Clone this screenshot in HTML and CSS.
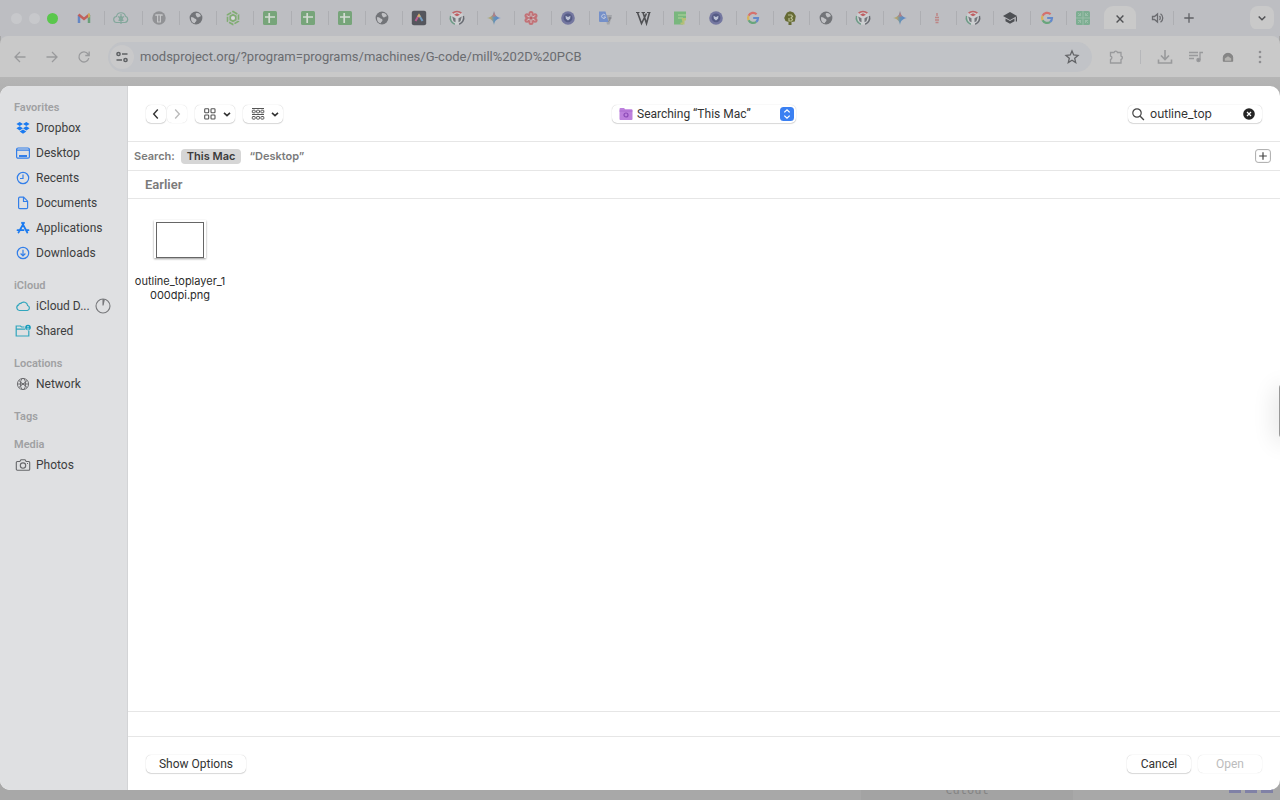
FILE: index.html
```html
<!DOCTYPE html>
<html lang="en">
<head>
<meta charset="utf-8">
<title>Open file</title>
<link rel="stylesheet" href="styles.css">
</head>
<body>
<svg class="defs" aria-hidden="true">
  <symbol id="sheet" viewBox="0 0 16 16"><rect x="1" y="1" width="14" height="14" rx="1.5" fill="#77a57a"/><path d="M3 7h10M7.2 3v10" stroke="#d4dbd3" stroke-width="1.7"/></symbol>
  <symbol id="globe" viewBox="0 0 16 16"><circle cx="8" cy="8" r="6.4" fill="#727478"/><path d="M3.2 7c2 0 2.600.8 3.400 1.500s1.900.3 1.900 1.800-1.500 1.300-1.700 3C4.500 13 2.400 10.800 3.200 7zM8 3.200c2-.8 4.300.6 4.900 2.800-.9 1.300-1.500.4-2.400 1.200S8.300 6.500 8.200 5.700 7 4.300 8 3.200z" fill="#c0c1c4"/></symbol>
  <symbol id="fab" viewBox="0 0 16 16"><circle cx="8" cy="8" r="6.800" fill="#cdcfd1"/><path d="M3.600 3.200A6.500 6.500 0 0 1 12.400 3.200" fill="none" stroke="#bf6668" stroke-width="1.600"/><path d="M1.600 6A6.600 6.600 0 0 0 5.800 14.200" fill="none" stroke="#6d9b86" stroke-width="1.500"/><path d="M14.400 6A6.600 6.600 0 0 1 10.200 14.200" fill="none" stroke="#686b72" stroke-width="1.500"/><path d="M8 3.200 11 4.700 8 6.200 5 4.700z" fill="#bf5d61"/><path d="m3.200 6.500 3.300 1.700v4l-2-1zM12.800 6.500 9.500 8.200v4l2-1z" fill="#74777c"/></symbol>
  <linearGradient id="gg" x1="0" x2="1"><stop offset="0" stop-color="#87a56d"/><stop offset=".25" stop-color="#b9a36a"/><stop offset=".5" stop-color="#6693b6"/><stop offset="1" stop-color="#577fce"/></linearGradient>
  <symbol id="gem" viewBox="0 0 16 16"><path d="M8 1c.7 4.300 2.700 6.300 7 7-4.300.7-6.300 2.700-7 7-.7-4.300-2.700-6.300-7-7 4.300-.7 6.300-2.700 7-7z" fill="url(#gg)"/><path d="M8 1c.5 3 1.500 4.500 2.500 5.500L8 6.500l-2 .3C7.200 5.500 7.700 3.500 8 1z" fill="#b67e80"/></symbol>
  <symbol id="goog" viewBox="0 0 16 16"><g fill="none" stroke-width="2.200"><path d="M11.600 4.200A5 5 0 0 0 3.600 5.800" stroke="#d5716c"/><path d="M3.600 5.800a5 5 0 0 0 0 4.400" stroke="#d8b35a"/><path d="M3.600 10.200a5 5 0 0 0 7.600 1.600" stroke="#68a57b"/><path d="M11.200 11.800A5 5 0 0 0 13 8H8.200" stroke="#6389cb"/></g></symbol>
  <symbol id="disc" viewBox="0 0 16 16"><circle cx="8" cy="8" r="6.800" fill="#7477a0"/><circle cx="8" cy="7.800" r="4.400" fill="#555b85"/><path d="M5.500 5.800 8 7l2.500-1.200-.4 3L8 10.500 5.900 8.800z" fill="#bcc2d5"/></symbol>
</svg>

<header class="tabstrip">
  <div class="lights"><i></i><i></i><i class="green"></i></div>
  <div class="tabs early">
    <span class="tab"><svg viewBox="0 0 16 16"><path d="M3 13V5" stroke="#6587c4" stroke-width="2.500"/><path d="M13 13V5" stroke="#6a9f79" stroke-width="2.500"/><path d="M2.500 4.500 8 9l5.500-4.500" fill="none" stroke="#c1605b" stroke-width="2.500"/><path d="M12 3.500h2V7l-2 1z" fill="#c9a95a"/></svg></span>
    <span class="tab"><svg viewBox="0 0 16 16" fill="none" stroke="#83a79b" stroke-width="1.200"><path d="M4 12.500a3 3 0 0 1-.5-6 4.600 4.600 0 0 1 9-.2 3.200 3.200 0 0 1-.5 6.200zM8 4v10M5 6.500l3 2 3-2M5.500 10.500 8 9l2.500 1.500"/><circle cx="8" cy="8" r="1.500"/></svg></span>
    <span class="tab"><svg viewBox="0 0 16 16"><circle cx="8" cy="8" r="6.700" fill="#919295"/><path d="M5 6V4.800h6V6M6.600 5v6.800M9.400 5v6.800M6 12h4" fill="none" stroke="#c5c6c8" stroke-width="1.200"/></svg></span>
    <span class="tab"><svg><use href="#globe"/></svg></span>
    <span class="tab"><svg viewBox="0 0 16 16" fill="none" stroke="#80ad72" stroke-width="1.600"><path d="m8 1.500 5.500 3.200v6.600L8 14.500l-5.500-3.200V4.700z" stroke-dasharray="5 1.300"/><path d="m8 4.700 2.800 1.600v3.400L8 11.300 5.200 9.700V6.300z"/><circle cx="8" cy="8" r="1" fill="#d9dcd9" stroke="#d9dcd9"/></svg></span>
    <span class="tab"><svg><use href="#sheet"/></svg></span>
    <span class="tab"><svg><use href="#sheet"/></svg></span>
    <span class="tab"><svg><use href="#sheet"/></svg></span>
    <span class="tab"><svg><use href="#globe"/></svg></span>
    <span class="tab"><svg viewBox="0 0 16 16"><rect x=".8" y=".8" width="14.400" height="14.400" rx="2" fill="#55565d"/><path d="M4.500 11 8 5" stroke="#b95e90" stroke-width="2"/><path d="m8 5 3.500 6" stroke="#729bc0" stroke-width="2"/><path d="M6.800 6.800 8 4.800l1.200 2" stroke="#d4b06b" stroke-width="1.500" fill="none"/></svg></span>
    <span class="tab"><svg><use href="#fab"/></svg></span>
    <span class="tab"><svg><use href="#gem"/></svg></span>
    <span class="tab"><svg viewBox="0 0 16 16"><g fill="#c27277"><circle cx="8" cy="3.500" r="2.500"/><circle cx="12" cy="5.700" r="2.500"/><circle cx="12" cy="10.300" r="2.500"/><circle cx="8" cy="12.500" r="2.500"/><circle cx="4" cy="10.300" r="2.500"/><circle cx="4" cy="5.700" r="2.500"/></g><path d="M8 3v10M3.700 5.500l8.600 5M3.700 10.500l8.600-5" stroke="#d1c2c4"/><circle cx="8" cy="8" r="1.800" fill="#b85f65"/></svg></span>
    <span class="tab"><svg><use href="#disc"/></svg></span>
    <span class="tab"><svg viewBox="0 0 16 16"><path d="M7 5h7l-2.500 9.500H9z" fill="#a3a5aa"/><path d="M1 1.500h6.500L10.500 12H2a1 1 0 0 1-1-1z" fill="#7590c9"/><path d="M7.300 5.200A2 2 0 1 0 7.600 7H5.800" fill="none" stroke="#c3cce0"/><path d="M10.500 8h3M12 7.500c0 2-.5 3-1.500 4" stroke="#7c7e84" fill="none"/></svg></span>
  </div>
  <div class="tabs late">
    <span class="tab"><svg viewBox="0 0 16 16" fill="none" stroke="#4f5053"><path d="M1 2.500h3.500M6.500 2.500H10M12 2.500h3.500" stroke-width="1.200"/><path d="m2.500 2.500 4 11 5-10M8 2.500l3.500 11 3-11" stroke-width="1.600"/></svg></span>
    <span class="tab"><svg viewBox="0 0 16 16"><path d="M2 1.500h12V8h-3v6.500H2z" fill="#79b77e"/><path d="M6 5h8M6 8h5" stroke="#9fcb93" stroke-width="1.500"/><path d="M9.500 8H14v2.500h-1.500v4h-4v-2h2z" fill="#b6bf77"/></svg></span>
    <span class="tab"><svg><use href="#disc"/></svg></span>
    <span class="tab"><svg><use href="#goog"/></svg></span>
    <span class="tab"><svg viewBox="0 0 16 16"><path d="M5 2.500 8 1.300l3.500 1.200L13.800 6l-1 5.500-3.300.5v3h-3v-3l-3-1L2.200 8 3.500 5z" fill="#666b35"/><path d="M6 5h3.500l1 1.500L9 8l1.500 1.500-1 1.500H7V8" fill="none" stroke="#babf91" stroke-width="1.200"/></svg></span>
    <span class="tab"><svg><use href="#globe"/></svg></span>
    <span class="tab"><svg><use href="#fab"/></svg></span>
    <span class="tab"><svg><use href="#gem"/></svg></span>
    <span class="tab"><svg viewBox="0 0 16 16"><path d="M8 3v3M6 7.500h4M6 10h4M6.500 12.500h3" stroke="#bd8585" stroke-width="1.500"/></svg></span>
    <span class="tab"><svg><use href="#fab"/></svg></span>
    <span class="tab"><svg viewBox="0 0 16 16" fill="#4e5054"><path d="m8 2 7 4-7 4-7-4zM3.500 8.600v2.700L8 13.700l4.500-2.400V8.600L8 11z"/><path d="M13.800 6.500H15v5h-1.200z"/></svg></span>
    <span class="tab"><svg><use href="#goog"/></svg></span>
    <span class="tab"><svg viewBox="0 0 16 16"><rect x="1" y="1" width="14" height="14" rx="1.500" fill="#7dae92"/><path d="M8 1v14M1 8h14M3 3l3 3M13 3l-3 3M3 13l3-3M13 13l-3-3M3 5.500h2.500V3M10.500 3v2.500H13M3 10.500h2.500V13M10.500 13v-2.500H13" fill="none" stroke="#9dc0ab" stroke-width=".9"/></svg></span>
  </div>
  <button class="active-tab" aria-label="Close tab"><svg viewBox="0 0 16 16"><path d="m4.600 4.600 6.800 6.800m0-6.800-6.800 6.800" stroke="#515255" stroke-width="1.400"/></svg></button>
  <button class="audio" aria-label="Mute tab"><svg viewBox="0 0 16 16"><path d="M2.500 6.500h2l3-2.500v8l-3-2.500h-2z" fill="none" stroke="#6b6c70" stroke-width="1.300"/><path d="M9.500 6c1 1 1 3 0 4M10.500 3.800c3 2 3 6.400 0 8.400" fill="none" stroke="#6b6c70" stroke-width="1.300"/></svg></button>
  <button class="new-tab" aria-label="New tab"><svg viewBox="0 0 16 16"><path d="M8 3.300v9.400M3.300 8h9.400" stroke="#606165" stroke-width="1.300"/></svg></button>
  <button class="tab-list" aria-label="Search tabs"><svg viewBox="0 0 16 16"><path d="m4.700 6.500 3.300 3.300 3.300-3.300" fill="none" stroke="#515255" stroke-width="1.500"/></svg></button>
</header>

<nav class="browserbar">
  <button aria-label="Back"><svg viewBox="0 0 16 16"><path d="M13.500 8H3M8 3 3 8l5 5"/></svg></button>
  <button aria-label="Forward"><svg viewBox="0 0 16 16"><path d="M2.500 8H13M8 3l5 5-5 5"/></svg></button>
  <button aria-label="Reload"><svg viewBox="0 0 16 16"><path d="M12.800 9.200A5 5 0 1 1 12 5l1 1.300M13.200 2.500v4H9.300"/></svg></button>
  <div class="omnibox">
    <label class="site" for="url" aria-label="Address"><svg viewBox="0 0 16 16" fill="none" stroke="#5e6063" stroke-width="1.500"><circle cx="4.500" cy="5" r="1.600"/><path d="M8 5h5.500M2.500 11H8"/><circle cx="11.500" cy="11" r="1.600"/></svg></label>
    <input id="url" type="text" value="modsproject.org/?program=programs/machines/G-code/mill%202D%20PCB">
    <svg class="star" viewBox="0 0 16 16"><path d="m8 2 1.700 4 4.300.4-3.300 2.900 1 4.200L8 11.200l-3.700 2.300 1-4.200L2 6.400 6.300 6z" fill="none" stroke="#626366" stroke-width="1.300"/></svg>
  </div>
  <div class="extras">
    <button aria-label="Extensions"><svg viewBox="0 0 16 16"><path d="M2.500 3.500H6a1.800 1.800 0 0 1 3.500 0H13V7a1.800 1.800 0 0 1 0 3.500V14H2.500v-3.500a1.800 1.800 0 0 0 0-3.500z"/></svg></button>
    <i class="bar"></i>
    <button aria-label="Downloads"><svg viewBox="0 0 16 16"><path d="M8 1v9M4 6.500 8 10.500l4-4M1.500 10.500V14h13v-3.500" stroke-width="1.600"/></svg></button>
    <button aria-label="Media"><svg viewBox="0 0 16 16"><path d="M1 3.500h9M1 6.500h9M1 9.500h5M12 11V3.500h3"/><circle cx="10.500" cy="11" r="1.600" fill="#929295"/></svg></button>
    <button aria-label="Profile"><svg viewBox="0 0 16 16"><path d="M3.300 12.300V8.500a4.700 4.200 0 0 1 9.400 0v3.800z" fill="#868686" stroke="#7c7c7c" stroke-width=".8"/><path d="M4.800 11.800V9.500L8 7.300l3.200 2.200v2.300z" fill="#b4b3b0" stroke="none"/></svg></button>
    <button aria-label="Menu"><svg viewBox="0 0 16 16"><g fill="#8e8e91" stroke="none"><circle cx="8" cy="3" r="1.300"/><circle cx="8" cy="8" r="1.300"/><circle cx="8" cy="13" r="1.300"/></g></svg></button>
  </div>
</nav>
<div class="workspace"><div class="node">cutout</div><div class="dashes"><i></i><i></i><i></i></div></div>

<main class="dialog" role="dialog" aria-label="Open">
  <aside class="sidebar">
    <h2>Favorites</h2>
    <a href="#"><svg viewBox="0 0 16 16" fill="#1a7af0"><path d="m4.700 2 3.300 2-3.300 2.100L1.400 4zM11.300 2l3.300 2-3.300 2.100L8 4zM4.700 6.200 8 8.300l-3.300 2.100-3.300-2.100zM11.300 6.200l3.300 2.100-3.300 2.100L8 8.300zM8 9.600l3.300 2L8 13.800l-3.300-2.200z"/></svg>Dropbox</a>
    <a href="#"><svg viewBox="0 0 16 16" fill="none" stroke="#337fe9" stroke-width="1.200"><rect x="1.600" y="3" width="12.800" height="10.200" rx="1.500"/><path d="M2 5.200h12"/><path d="M4 11h8" stroke-width="2"/></svg>Desktop</a>
    <a href="#"><svg viewBox="0 0 16 16" fill="none" stroke="#337fe9" stroke-width="1.200"><circle cx="8" cy="8" r="5.700"/><path d="M8 4.500V8.500H5"/></svg>Recents</a>
    <a href="#"><svg viewBox="0 0 16 16" fill="none" stroke="#337fe9" stroke-width="1.200"><path d="M4.800 2.200h3.800l4 4v6.300a1.200 1.200 0 0 1-1.200 1.200H4.800a1.200 1.200 0 0 1-1.200-1.200V3.400a1.200 1.200 0 0 1 1.200-1.200zM8.500 2.500v4h4"/></svg>Documents</a>
    <a href="#"><svg viewBox="0 0 16 16" fill="none" stroke="#1a7af0" stroke-width="1.800" stroke-linecap="round"><path d="m7 2.800 5.300 9.700M9 2.800l-4.500 8M2.500 10.200h6M11.500 10.200h2M3.500 12.500l.3-.5"/></svg>Applications</a>
    <a href="#"><svg viewBox="0 0 16 16" fill="none" stroke="#337fe9" stroke-width="1.200"><circle cx="8" cy="8" r="5.700"/><path d="M8 4.800v6M5.600 8.500 8 10.900l2.400-2.400"/></svg>Downloads</a>
    <h2>iCloud</h2>
    <a href="#"><svg viewBox="0 0 16 16" fill="none" stroke="#31a6bd" stroke-width="1.200"><path d="M4.300 12.500a2.900 2.900 0 0 1-.6-5.600 1.800 1.800 0 0 1 2-1.400 3.900 3.900 0 0 1 6.900 2 2.600 2.600 0 0 1-.2 5z"/></svg><span>iCloud D...</span><svg class="progress" viewBox="0 0 16 16" fill="none" stroke="#77787b" stroke-width="1.100"><circle cx="8" cy="8" r="7"/><path d="M8 1v6.500L9.300 1.500" fill="#77787b"/></svg></a>
    <a href="#"><svg viewBox="0 0 16 16" fill="none" stroke="#31a6bd" stroke-width="1.200"><path d="M9.500 4H6.500L5.500 3H1.200v10h12.600V7.500M1.200 6.200h9"/><circle cx="13" cy="4.500" r="2.800" fill="#159bbb" stroke="none"/><path d="M13 3v1.500M11.700 6h2.600" stroke="#d9edf1"/></svg>Shared</a>
    <h2>Locations</h2>
    <a href="#"><svg viewBox="0 0 16 16" fill="none" stroke="#66676a" stroke-width=".9"><circle cx="8" cy="8" r="5.600"/><ellipse cx="8" cy="8" rx="2.600" ry="5.600"/><path d="M2.500 8h11M3.800 4.500l8.400 7M12.200 4.500l-8.400 7"/></svg>Network</a>
    <h2>Tags</h2>
    <h2>Media</h2>
    <a href="#"><svg viewBox="0 0 16 16" fill="none" stroke="#66676a" stroke-width="1.100"><path d="M2.300 4.500h2.500L6 2.800h4l1.200 1.700h2.500a1 1 0 0 1 1 1v6.700a1 1 0 0 1-1 1H2.300a1 1 0 0 1-1-1V5.500a1 1 0 0 1 1-1z"/><circle cx="8" cy="8.600" r="2.700"/><path d="M12 6.500h1"/></svg>Photos</a>
  </aside>

  <section class="main">
    <div class="toolbar">
      <div class="left">
        <div class="pair">
          <button class="ctl nav" aria-label="Back"><svg viewBox="0 0 16 16"><path d="M9.800 3.500 5.700 8l4.100 4.500" stroke="#333" stroke-width="1.400"/></svg></button>
          <button class="ctl nav" aria-label="Forward" disabled><svg viewBox="0 0 16 16"><path d="M6.200 3.500 10.300 8l-4.100 4.500" stroke="#bbb" stroke-width="1.400"/></svg></button>
        </div>
        <button class="ctl view" aria-label="Icon view"><svg viewBox="0 0 16 16" stroke="#555" stroke-width="1.100"><rect x="2.700" y="2.700" width="4" height="4" rx=".8"/><rect x="9" y="2.700" width="4" height="4" rx=".8"/><rect x="2.700" y="9" width="4" height="4" rx=".8"/><rect x="9" y="9" width="4" height="4" rx=".8"/></svg><svg class="chev" viewBox="0 0 8 16"><path d="m1 6.800 3 2.800 3-2.800" stroke="#333" stroke-width="1.600"/></svg></button>
        <button class="ctl view" aria-label="Group by"><svg viewBox="0 0 16 16" stroke="#555" stroke-width="1"><path d="M2 2.500h12M2 8.500h12"/><rect x="2.300" y="4.200" width="2.900" height="2.600" rx=".6"/><rect x="6.600" y="4.200" width="2.900" height="2.600" rx=".6"/><rect x="10.900" y="4.200" width="2.900" height="2.600" rx=".6"/><rect x="2.300" y="10.500" width="2.900" height="2.600" rx=".6"/><rect x="6.600" y="10.500" width="2.900" height="2.600" rx=".6"/><rect x="10.900" y="10.500" width="2.900" height="2.600" rx=".6"/></svg><svg class="chev" viewBox="0 0 8 16"><path d="m1 6.800 3 2.800 3-2.800" stroke="#333" stroke-width="1.600"/></svg></button>
      </div>
      <button class="ctl place"><svg viewBox="0 0 16 16"><path d="M1.500 3a1 1 0 0 1 1-1H6l1.200 1.300h6.300a1 1 0 0 1 1 1V13a1 1 0 0 1-1 1h-11a1 1 0 0 1-1-1z" fill="#bd80dd"/><path d="M1.500 5h13" stroke="#a666cb" stroke-width=".8"/><circle cx="8" cy="9" r="2" stroke="#8b49b6" stroke-width="1.200"/></svg><span>Searching “This Mac”</span><svg class="updown" viewBox="0 0 14 14"><rect width="14" height="14" rx="3.500" fill="#3b80f2"/><path d="m4.300 5.400 2.700-2.600 2.700 2.600M4.300 8.600 7 11.200l2.700-2.600" stroke="#fff" stroke-width="1.300"/></svg></button>
      <div class="right">
        <div class="ctl search">
          <label for="q" aria-label="Search"><svg viewBox="0 0 16 16"><circle cx="7" cy="7" r="4.200" stroke="#444" stroke-width="1.200"/><path d="m10.200 10.200 3.700 3.700" stroke="#444" stroke-width="1.400"/></svg></label>
          <input id="q" type="text" value="outline_top">
          <button class="clear" aria-label="Clear"><svg viewBox="0 0 12 12"><circle cx="6" cy="6" r="5.800" fill="#242424"/><path d="m4 4 4 4m0-4L4 8" stroke="#fff" stroke-width="1.200"/></svg></button>
        </div>
      </div>
    </div>
    <div class="scope">
      <span>Search:</span><button class="on">This Mac</button><button>“Desktop”</button>
      <button class="add" aria-label="Add rule"><svg viewBox="0 0 16 16"><rect x=".6" y="1.600" width="14.800" height="12.800" rx="2.500" stroke="#aaa"/><path d="M8 4.200v7.600M4.200 8h7.600" stroke="#444" stroke-width="1.200"/></svg></button>
    </div>
    <h1 class="group">Earlier</h1>
    <div class="files">
      <figure><div class="thumb"></div><figcaption>outline_toplayer_1<br>000dpi.png</figcaption></figure>
    </div>
    <div class="pathbar"></div>
    <footer>
      <button class="ctl options">Show Options</button>
      <div class="actions"><button class="ctl">Cancel</button><button class="ctl" disabled>Open</button></div>
    </footer>
  </section>
</main>
<div class="edge"></div>
</body>
</html>
```
FILE: styles.css
```css
* { box-sizing: border-box; }
body { margin: 0; height: 100vh; overflow: hidden; position: relative; display: flex; flex-direction: column; background: #a8a8a8; font: 12px/16px Roboto, sans-serif; color: #3d3e40; }
button { appearance: none; border: 0; padding: 0; margin: 0; background: none; font: inherit; color: inherit; display: flex; align-items: center; justify-content: center; }
input { border: 0; padding: 0; background: none; font: inherit; color: inherit; min-width: 0; outline: 0; }
svg { display: block; width: 16px; height: 16px; flex: none; }
.defs { position: absolute; width: 0; height: 0; }

.tabstrip { height: 36px; flex: none; display: flex; align-items: center; background: #bdbec2; padding-right: 6px; }
.lights { width: 68px; padding-left: 11px; display: flex; gap: 7px; }
.lights i { width: 11px; height: 11px; border-radius: 50%; background: #c7c8cb; }
.lights .green { background: #5ac74c; }
.tabs { display: flex; min-width: 0; }
.early { flex: 559 1 0; }
.late { flex: 477 1 0; }
.tab { flex: 1 1 0; min-width: 0; padding-left: 8px; display: flex; align-items: center; justify-content: space-between; }
.tab::after { content: ""; width: 1px; height: 14px; background: #adaeb2; }
.late .tab:last-child::after { visibility: hidden; }
.active-tab { width: 32px; height: 30px; padding-bottom: 5px; align-self: flex-end; background: #c9c9c9; border-radius: 9px 9px 0 0; }
.audio { width: 38px; height: 14px; padding-left: 6px; border-right: 1px solid #adaeb2; }
.new-tab { width: 30px; }
.tab-list { width: 24px; height: 24px; margin-left: 46px; border-radius: 8px; background: #c9c9c9; }

.browserbar { height: 41px; flex: none; display: flex; align-items: center; background: #c9c9c9; border-radius: 8px 8px 0 0; padding: 0 12px; gap: 16px; box-shadow: 0 -8px 0 -1px #bdbec2; }
.browserbar button svg { fill: none; stroke: #999a9c; stroke-width: 1.300; }
.omnibox { flex: 1; height: 30px; border-radius: 15px; background: #c1c3c7; display: flex; align-items: center; padding: 0 12px 0 2px; font-size: 13px; color: #6a6c70; }
.omnibox input { flex: 1; }
.site { width: 24px; height: 24px; margin-right: 6px; border-radius: 50%; background: #c9c9ca; display: grid; place-items: center; }
.extras { display: flex; align-items: center; justify-content: space-between; width: 160px; }
.bar { width: 1px; height: 14px; background: #b6b7ba; }
.workspace { flex: 1; background: linear-gradient(#b5b5b5, #a8a8a8 40px); display: flex; align-items: flex-end; justify-content: flex-end; padding-right: 7px; }
.node { width: 212px; height: 18px; margin-right: 156px; background: #a3a3a3; text-align: center; font: 12px/16px "DejaVu Sans Mono", monospace; color: #858585; }
.dashes { display: flex; gap: 4px; padding-bottom: 7px; }
.dashes i { width: 12px; height: 4px; background: #8081a6; }

.dialog { position: absolute; top: 86px; left: 0; right: 0; bottom: 10px; display: flex; background: #fff; border-radius: 10px; overflow: hidden; }
.sidebar { width: 128px; flex: none; background: #dfe0e2; border-right: 1px solid #d3d4d6; padding: 14px 0 0 14px; }
.sidebar h2 { margin: 13px 0 0; font-size: 11px; line-height: 15px; font-weight: 600; color: #a0a1a3; }
.sidebar h2:first-child { margin-top: 0; }
.sidebar a { height: 25px; display: flex; align-items: center; gap: 5px; padding-left: 1px; color: #3d3e40; text-decoration: none; white-space: nowrap; }
.main { flex: 1; min-width: 0; display: flex; flex-direction: column; }
.toolbar { height: 56px; flex: none; display: flex; align-items: center; padding: 0 18px; border-bottom: 1px solid #e6e6e6; }
.left, .right { flex: 1; display: flex; align-items: center; gap: 8px; }
.right { justify-content: flex-end; }
.ctl { height: 18px; border-radius: 5px; background: #fff; box-shadow: 0 0 1px #0004, 0 1px 1px #0002; color: #333; }
.ctl svg, .scope svg { fill: none; }
.pair { display: flex; gap: 1px; }
.nav { width: 20px; }
.view { width: 40px; gap: 5px; padding-left: 2px; }
.chev { width: 8px; }
.place { width: 184px; padding: 0 2px 0 6px; gap: 3px; }
.place span { flex: 1; text-align: left; white-space: nowrap; }
.place .updown { width: 14px; height: 14px; }
.search { width: 134px; display: flex; align-items: center; padding: 0 7px 0 2px; gap: 4px; }
.search input { flex: 1; font-family: Inter, sans-serif; }
.clear svg { width: 12px; height: 12px; }
.scope { height: 29px; flex: none; display: flex; align-items: center; padding: 0 9px 0 6px; border-bottom: 1px solid #e6e6e6; font: 600 11px/16px Inter, sans-serif; color: #7b7b7b; }
.scope .on { height: 15px; margin: 0 2px 0 6px; padding: 0 6px; border-radius: 4px; background: #d6d6d6; color: #3b3b3b; }
.scope button { padding: 0 6px; }
.scope .add { margin-left: auto; padding: 0; }
.group { margin: 0; height: 28px; flex: none; padding-left: 17px; border-bottom: 1px solid #e6e6e6; font: 600 13px/27px Roboto, sans-serif; color: #7b7b7b; }
.files { flex: 1; padding: 21px 0 0 2px; }
figure { margin: 0; width: 100px; display: flex; flex-direction: column; align-items: center; gap: 16px; }
.thumb { width: 52px; height: 38px; border: 2px solid #fff; box-shadow: 0 1px 2px #0006; }
.thumb::before { content: ""; display: block; height: 34px; border: 1px solid #666; }
figcaption { font: 11px/14px Inter, sans-serif; text-align: center; color: #2b2b2b; white-space: nowrap; }
.pathbar { height: 26px; flex: none; border: solid #e6e6e6; border-width: 1px 0; }
footer { height: 53px; flex: none; display: flex; align-items: center; justify-content: space-between; padding: 0 18px; }
.options { width: 100px; }
.actions { display: flex; gap: 7px; }
.actions .ctl { width: 64px; }
.ctl:disabled { color: #bcbcbc; box-shadow: 0 0 1px #0003; }
.edge { position: absolute; right: -9px; top: 384px; width: 10px; height: 54px; border-radius: 4px; background: #999; box-shadow: 0 4px 24px #0003; }
```
